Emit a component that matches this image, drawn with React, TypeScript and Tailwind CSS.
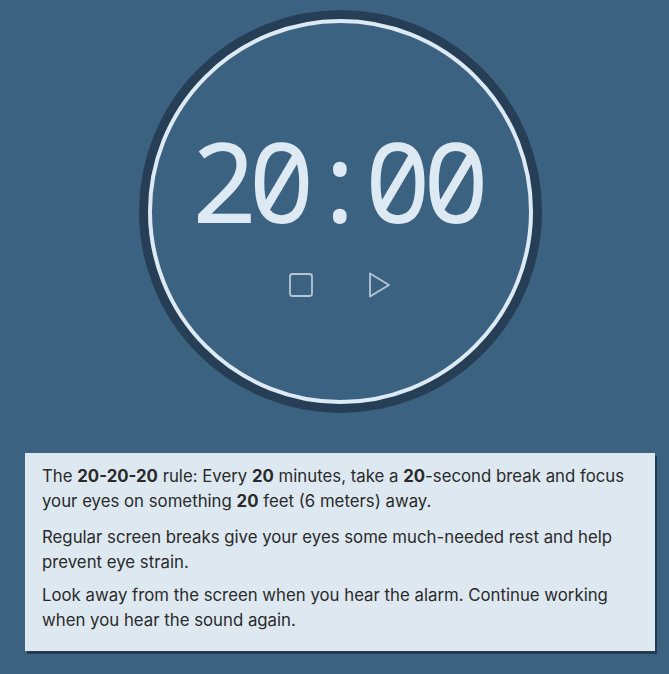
export default function App() {
  return (
    <div className="min-h-[674px] w-full bg-[#3c6282] pl-[25px] pr-[14px] pt-[10px] pb-[20px] font-['Inter','Noto_Sans',sans-serif]">
      <div className="w-[630px]">
        {/* Timer dial */}
        <div className="mx-auto h-[403px] w-[403px] rounded-full border-[9px] border-[#263f56]">
          <div className="flex h-full w-full flex-col items-center rounded-full border-[4px] border-[#dde9f3]">
            <div className="mt-[102px] -ml-[9px] font-['Noto_Sans_Mono',monospace] text-[111px] leading-none tracking-[-8.5px] text-[#dde9f3] [font-feature-settings:'zero']">
              20:00
            </div>
            <div className="mt-[36px] flex items-center gap-[52px] text-[#b3c6d6]">
              <button className="flex h-[26px] w-[26px] items-center justify-center">
                <svg width="26" height="26" viewBox="0 0 26 26" fill="none" stroke="currentColor" strokeWidth="1.8">
                  <rect x="2" y="2" width="22" height="22" rx="2.5" />
                </svg>
              </button>
              <button className="flex h-[26px] w-[26px] items-center justify-center">
                <svg width="24" height="28" viewBox="0 0 24 28" fill="none" stroke="currentColor" strokeWidth="1.8" strokeLinejoin="round">
                  <path d="M3 2.5 L22 14 L3 25.5 Z" />
                </svg>
              </button>
            </div>
          </div>
        </div>

        {/* Info card */}
        <div className="mt-[40px] bg-[#dde8f1] px-[17px] pt-[11px] pb-[18px] text-[16.8px] leading-[25px] text-[#2a2a2a] shadow-[2px_3px_0_#243a50]">
          <p className="mb-[11px]">
            The <b className="font-bold">20-20-20</b> rule: Every <b className="font-bold">20</b> minutes, take a{" "}
            <b className="font-bold">20</b>-second break and focus your eyes on something <b className="font-bold">20</b> feet (6 meters) away.
          </p>
          <p className="mb-[8px]">
            Regular screen breaks give your eyes some much-needed rest and help prevent eye strain.
          </p>
          <p>
            Look away from the screen when you hear the alarm. Continue working when you hear the sound again.
          </p>
        </div>
      </div>
    </div>
  );
}
